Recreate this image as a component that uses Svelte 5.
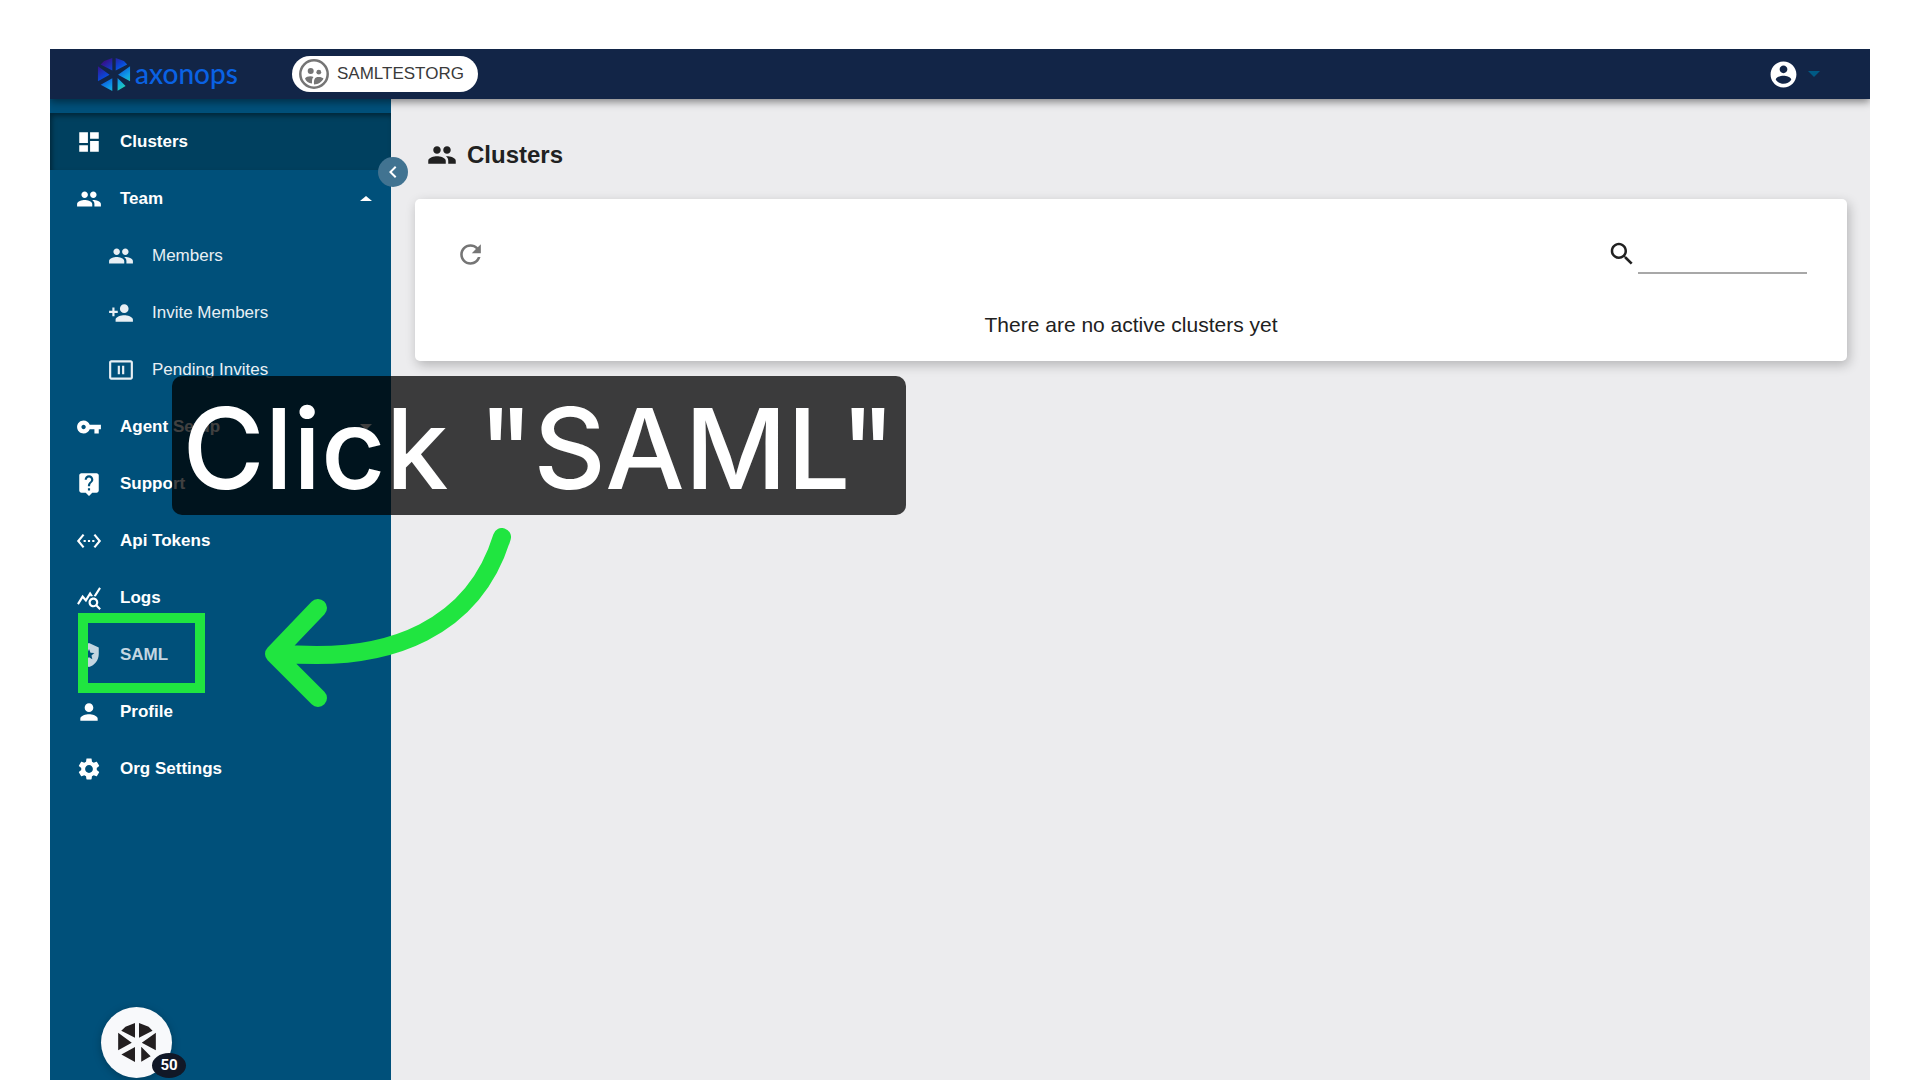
<script>
  const P = {
    dashboard: 'M3 13h8V3H3v10zm0 8h8v-6H3v6zm10 0h8V11h-8v10zm0-18v6h8V3h-8z',
    group: 'M16 11c1.66 0 2.99-1.34 2.99-3S17.66 5 16 5s-3 1.34-3 3 1.34 3 3 3zm-8 0c1.66 0 2.99-1.34 2.99-3S9.66 5 8 5 5 6.34 5 8s1.34 3 3 3zm0 2c-2.33 0-7 1.17-7 3.5V19h14v-2.500c0-2.330-4.670-3.500-7-3.500zm8 0c-.29 0-.62.02-.97.05 1.16.84 1.97 1.970 1.970 3.450V19h6v-2.500c0-2.330-4.670-3.500-7-3.500z',
    add: 'M15 12c2.210 0 4-1.790 4-4s-1.790-4-4-4-4 1.790-4 4 1.790 4 4 4zm-9-2V7H4v3H1v2h3v3h2v-3h3v-2H6zm9 4c-2.670 0-8 1.340-8 4v2h16v-2c0-2.660-5.330-4-8-4z',
    pending: 'M9 8h2v8H9zm4 0h2v8h-2zM21 3H3c-1.100 0-2 .9-2 2v14c0 1.100.9 2 2 2h18c1.100 0 2-.9 2-2V5c0-1.100-.9-2-2-2zm0 16H3V5h18v14z',
    key: 'M12.650 10C11.830 7.670 9.610 6 7 6c-3.310 0-6 2.690-6 6s2.690 6 6 6c2.610 0 4.830-1.670 5.650-4H17v4h4v-4h2v-4H12.650zM7 14c-1.100 0-2-.9-2-2s.9-2 2-2 2 .9 2 2-.9 2-2 2z',
    help: 'M19 2H5c-1.110 0-2 .9-2 2v14c0 1.100.89 2 2 2h4l3 3 3-3h4c1.100 0 2-.9 2-2V4c0-1.100-.9-2-2-2zm-6 16h-2v-2h2v2zm2.070-7.750l-.9.920C13.450 11.900 13 12.500 13 14h-2v-.5c0-1.100.45-2.100 1.170-2.830l1.240-1.260c.37-.36.59-.86.59-1.410 0-1.100-.9-2-2-2s-2 .9-2 2H8c0-2.210 1.790-4 4-4s4 1.790 4 4c0 .88-.36 1.680-.93 2.250z',
    api: 'M7.770 6.760L6.230 5.480.82 12l5.410 6.520 1.540-1.280L3.420 12l4.350-5.240zM7 13h2v-2H7v2zm10-2h-2v2h2v-2zm-6 2h2v-2h-2v2zm6.770-7.520l-1.540 1.280L20.580 12l-4.350 5.240 1.540 1.280L23.180 12l-5.410-6.520z',
    logs: 'M19.880 18.470c.44-.7.7-1.510.7-2.390 0-2.490-2.010-4.500-4.500-4.500s-4.500 2.010-4.500 4.500 2.010 4.500 4.490 4.500c.88 0 1.700-.26 2.390-.7L21.580 23 23 21.580l-3.120-3.110zm-3.800.11c-1.380 0-2.500-1.120-2.500-2.500s1.120-2.500 2.500-2.500 2.500 1.120 2.500 2.500-1.120 2.500-2.500 2.500zm-.36-8.500c-.74.02-1.450.18-2.100.45l-.55-.83-3.800 6.180-3.010-3.520-3.630 5.810L1 17l5-8 3 3.500L13 6l2.720 4.080zm2.590.5c-.64-.28-1.330-.45-2.050-.49L21.380 2 23 3.180l-4.690 7.400z',
    shield: 'M12 1L3 5v6c0 5.550 3.840 10.740 9 12 5.160-1.260 9-6.450 9-12V5l-9-4zm3.080 15L12 14.150 8.930 16l.81-3.500-2.710-2.340 3.580-.31L12 6.550l1.390 3.290 3.580.31-2.710 2.350.82 3.500z',
    person: 'M12 12c2.210 0 4-1.790 4-4s-1.790-4-4-4-4 1.790-4 4 1.790 4 4 4zm0 2c-2.670 0-8 1.340-8 4v2h16v-2c0-2.660-5.330-4-8-4z',
    gear: 'M19.140 12.940c.04-.3.06-.61.06-.94 0-.32-.02-.64-.07-.94l2.030-1.580c.18-.14.23-.41.12-.61l-1.920-3.320c-.12-.22-.37-.29-.59-.22l-2.390.96c-.5-.38-1.030-.7-1.620-.94l-.36-2.540c-.04-.24-.24-.41-.48-.41h-3.840c-.24 0-.43.17-.47.41l-.36 2.540c-.59.24-1.130.57-1.620.94l-2.390-.96c-.22-.08-.47 0-.59.22L2.740 8.870c-.12.21-.08.47.12.61l2.030 1.580c-.05.3-.09.63-.09.94s.02.64.07.94l-2.030 1.580c-.18.14-.23.41-.12.61l1.920 3.320c.12.22.37.29.59.22l2.390-.96c.5.38 1.030.7 1.620.94l.36 2.540c.05.24.24.41.48.41h3.840c.24 0 .44-.17.47-.41l.36-2.540c.59-.24 1.130-.56 1.620-.94l2.390.96c.22.08.47 0 .59-.22l1.920-3.320c.12-.22.07-.47-.12-.61l-2.010-1.580zM12 15.600c-1.980 0-3.600-1.620-3.600-3.600s1.620-3.600 3.600-3.600 3.600 1.620 3.600 3.600-1.620 3.600-3.600 3.600z',
    account: 'M12 2C6.480 2 2 6.480 2 12s4.480 10 10 10 10-4.480 10-10S17.520 2 12 2zm0 3c1.660 0 3 1.340 3 3s-1.340 3-3 3-3-1.340-3-3 1.340-3 3-3zm0 14.200c-2.500 0-4.710-1.280-6-3.220.03-1.990 4-3.080 6-3.080 1.990 0 5.970 1.090 6 3.080-1.290 1.940-3.500 3.220-6 3.220z',
    refresh: 'M17.650 6.350C16.200 4.900 14.210 4 12 4c-4.420 0-7.990 3.580-7.990 8s3.570 8 7.990 8c3.730 0 6.840-2.550 7.730-6h-2.080c-.82 2.330-3.040 4-5.650 4-3.310 0-6-2.690-6-6s2.690-6 6-6c1.660 0 3.140.69 4.220 1.780L13 11h7V4l-2.350 2.350z',
    search: 'M15.500 14h-.79l-.28-.27C15.410 12.590 16 11.110 16 9.500 16 5.910 13.090 3 9.500 3S3 5.910 3 9.500 5.910 16 9.500 16c1.610 0 3.090-.59 4.230-1.570l.27.28v.79l5 4.990L20.490 19l-4.990-5zm-6 0C7.010 14 5 11.990 5 9.500S7.010 5 9.500 5 14 7.010 14 9.500 11.990 14 9.500 14z',
    chevron: 'M15.410 7.410L14 6l-6 6 6 6 1.410-1.410L10.830 12z'
  };
  const items = [
    { label: 'Clusters', icon: 'dashboard', active: true },
    { label: 'Team', icon: 'group', caret: 'up' },
    { label: 'Members', icon: 'group', sub: true },
    { label: 'Invite Members', icon: 'add', sub: true },
    { label: 'Pending Invites', icon: 'pending', sub: true },
    { label: 'Agent Setup', icon: 'key', caret: 'down' },
    { label: 'Support', icon: 'help' },
    { label: 'Api Tokens', icon: 'api' },
    { label: 'Logs', icon: 'logs' },
    { label: 'SAML', icon: 'shield', dim: true },
    { label: 'Profile', icon: 'person' },
    { label: 'Org Settings', icon: 'gear' }
  ];
  // The six segments of the wheel mark.
  const wheel =
    'M16.200 1V14.300L3.800 8L7.600 4.200z' +
    'M19.800 1L28.500 4.200L32 8L19.800 14.300z' +
    'M35 9.800V25.600L22.300 18.800z' +
    'M21.800 22.300L30.300 30.800L21.800 35.800z' +
    'M16.200 22.600V36L3.900 29.400z' +
    'M1 9.800L13.300 18.800L1 25.600z';
</script>

{#snippet icon(name)}
  <svg class="icon" viewBox="0 0 24 24" aria-hidden="true"><path d={P[name]} /></svg>
{/snippet}

<div class="page">
  <div class="app">
    <header>
      <a class="brand" href="#home">
        <svg viewBox="0 0 36 37" aria-hidden="true">
          <defs>
            <linearGradient id="wheel" gradientUnits="userSpaceOnUse" x1="6" y1="4" x2="28" y2="34">
              <stop offset="0" stop-color="#3a0a80" />
              <stop offset="0.400" stop-color="#0a48d8" />
              <stop offset="0.750" stop-color="#10a0e8" />
              <stop offset="1" stop-color="#20d0b0" />
            </linearGradient>
          </defs>
          <path d={wheel} fill="url(#wheel)" />
        </svg>
        <span>axonops</span>
      </a>
      <button class="org">
        <svg viewBox="0 0 30 30" aria-hidden="true">
          <circle cx="15" cy="15" r="13.700" fill="none" stroke="#757575" stroke-width="2.500" />
          <circle cx="11.700" cy="12" r="3" /><circle cx="19.800" cy="13.200" r="2.400" />
          <path d="M6 19.500c1.500-2.500 6.500-3 8.500-1.500-1.600 1.600-1.500 3.500-1.500 6.500-3.500-.4-6-2.200-7-5zM15 25.500c-.3-5 .5-7.500 4.600-7.500 2.300 0 4 .6 4.900 1.600-1.500 3.400-5 5.900-9.500 5.900z" />
        </svg>
        <span>SAMLTESTORG</span>
      </button>
      <button class="account" aria-label="Account">
        {@render icon('account')}
        <i class="caret down"></i>
      </button>
    </header>
    <div class="body">
      <aside>
        <nav>
          {#each items as it}
            <a href="#{it.label}" class:active={it.active} class:sub={it.sub} class:dim={it.dim}>
              {@render icon(it.icon)}
              <span>{it.label}</span>
              {#if it.caret}<i class="caret {it.caret}"></i>{/if}
            </a>
          {/each}
        </nav>
        <button class="collapse" aria-label="Collapse menu">{@render icon('chevron')}</button>
      </aside>
      <main>
        <h1>{@render icon('group')}<span>Clusters</span></h1>
        <section class="card">
          <div class="tools">
            <button class="refresh" aria-label="Refresh">{@render icon('refresh')}</button>
            <label class="search">{@render icon('search')}<input type="text" aria-label="Search" /></label>
          </div>
          <p>There are no active clusters yet</p>
        </section>
      </main>
    </div>
  </div>

  <div class="callout">Click "SAML"</div>
  <div class="highlight"></div>
  <svg class="arrow" viewBox="0 0 248 180" aria-hidden="true">
    <path d="M239 9C212 97 131 137 14 125M55 80L11 126L55 170" />
  </svg>
  <button class="help" aria-label="Help, 50 items">
    <svg viewBox="0 0 36 37" aria-hidden="true">
      <path d={wheel} />
    </svg>
    <b>50</b>
  </button>
</div>

<style>
  :global(body) { margin: 0; background: #fff; }
  .page {
    position: relative;
    box-sizing: border-box;
    height: 100vh;
    padding: 49px 50px 0;
    overflow: hidden;
    font-family: 'Liberation Sans', Arial, sans-serif;
    font-size: 17px;
    color: #212121;
  }
  .app { display: flex; flex-direction: column; height: 100%; overflow: hidden; }
  button { border: 0; padding: 0; background: none; font: inherit; color: inherit; cursor: pointer; }
  a { text-decoration: none; color: inherit; }
  .icon { display: block; flex: none; width: 26px; height: 26px; fill: currentColor; }
  .caret { border: 6px solid transparent; border-width: 0 6px; }
  .caret.up { border-bottom: 5px solid currentColor; }
  .caret.down { border-top: 6px solid currentColor; }

  header {
    position: relative;
    z-index: 1;
    display: flex;
    flex: none;
    align-items: center;
    height: 50px;
    padding: 0 50px 0 47px;
    background: #122547;
    box-shadow: 0 3px 8px rgb(0 0 0 / 45%);
  }
  .brand { display: flex; align-items: center; gap: 4px; width: 195px; color: #0a62e4; }
  .brand svg { width: 34px; height: 35px; }
  .brand span { font: 500 28px/28px Lato, sans-serif; padding-bottom: 2px; }
  .org {
    display: flex;
    align-items: center;
    gap: 8px;
    height: 36px;
    padding: 0 14px 0 7px;
    border-radius: 18px;
    background: #fff;
    color: #3a3a3a;
  }
  .org svg { width: 30px; height: 30px; fill: #757575; }
  .account { display: flex; align-items: center; gap: 9px; margin-left: auto; color: #fff; }
  .account .icon { width: 31px; height: 31px; }
  .account .caret { color: #005a85; }

  .body { display: flex; flex: 1; min-height: 0; }
  aside { position: relative; flex: none; width: 341px; background: #00507a; color: #fff; }
  nav { display: flex; flex-direction: column; padding-top: 14px; }
  nav a {
    display: flex;
    align-items: center;
    gap: 18px;
    height: 57px;
    padding: 0 19px 0 26px;
    font-weight: bold;
  }
  nav .active { background: #00405f; box-shadow: inset 2px 3px 5px rgb(0 0 0 / 40%); }
  nav .sub { padding-left: 58px; font-weight: normal; color: #e8eff4; }
  nav .dim { color: #c4d6e1; }
  nav .caret { margin-left: auto; }
  .collapse {
    position: absolute;
    top: 58px;
    right: -17px;
    display: grid;
    place-items: center;
    width: 30px;
    height: 30px;
    border-radius: 50%;
    background: #417391;
  }
  .collapse .icon { width: 24px; height: 24px; }

  main { flex: 1; padding: 38px 23px 0 24px; background: #ececee; }
  h1 { display: flex; align-items: center; gap: 10px; margin: 0 0 26px 12px; font-size: 24px; line-height: 36px; }
  h1 .icon { width: 30px; height: 30px; }
  .card {
    padding: 36px 40px 24px;
    border-radius: 5px;
    background: #fff;
    box-shadow: 2px 4px 12px rgb(0 0 0 / 24%);
  }
  .tools { display: flex; justify-content: space-between; align-items: center; height: 38px; }
  .refresh { color: #757575; }
  .refresh .icon { width: 31px; height: 31px; }
  .search { display: flex; align-items: center; gap: 1px; }
  .search .icon { width: 30px; height: 30px; }
  .search input {
    width: 169px;
    height: 40px;
    box-sizing: border-box;
    padding: 0;
    border: 0;
    border-bottom: 2px solid #a8a8a8;
    background: none;
    font: inherit;
    outline: 0;
  }
  .card p { margin: 40px 0 0; text-align: center; font-size: 21px; line-height: 24px; }

  .callout {
    position: absolute;
    left: 172px;
    top: 376px;
    box-sizing: border-box;
    width: 734px;
    height: 139px;
    padding-top: 3px;
    border-radius: 10px;
    background: rgb(0 0 0 / 75%);
    color: #fff;
    font: 500 112px/139px Inter, sans-serif;
    text-align: center;
    white-space: nowrap;
  }
  .highlight {
    position: absolute;
    left: 78px;
    top: 613px;
    box-sizing: border-box;
    width: 127px;
    height: 80px;
    border: 10px solid #20e540;
  }
  .arrow {
    position: absolute;
    left: 263px;
    top: 528px;
    width: 248px;
    height: 180px;
    fill: none;
    stroke: #20e540;
    stroke-width: 18px;
    stroke-linecap: round;
    stroke-linejoin: round;
  }
  .help {
    position: absolute;
    left: 101px;
    bottom: 2px;
    display: grid;
    place-items: center;
    width: 71px;
    height: 71px;
    border-radius: 50%;
    background: #f8f9fb;
    box-shadow: 0 2px 8px rgb(0 0 0 / 25%);
  }
  .help svg { width: 40px; height: 41px; fill: #231f20; }
  .help b {
    position: absolute;
    right: -14px;
    bottom: 0;
    width: 34px;
    border-radius: 50%;
    background: #111827;
    color: #fff;
    font: bold 15px/25px Roboto, sans-serif;
  }
</style>
